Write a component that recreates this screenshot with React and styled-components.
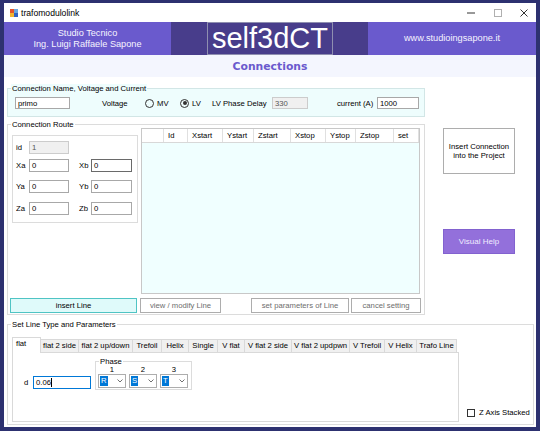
import React from "react";
import styled, { createGlobalStyle } from "styled-components";

const GlobalStyle = createGlobalStyle`
  html, body {
    margin: 0;
    padding: 0;
    background: #2d3170;
  }
  body {
    font-family: "Liberation Sans", Arial, sans-serif;
    font-size: 7.7px;
    color: #000;
  }
  * {
    box-sizing: border-box;
  }
`;

const Frame = styled.div`
  width: 540px;
  height: 431px;
  padding: 3px 4px 4px 4px;
  background: #2d3170;
`;

const Window = styled.div`
  width: 532px;
  height: 424px;
  background: #fff;
  display: flex;
  flex-direction: column;
  overflow: hidden;
`;

const TitleBar = styled.div`
  height: 19px;
  display: flex;
  align-items: center;
  padding-left: 6px;
  background: #fff;
`;

const TitleText = styled.span`
  margin-left: 3px;
  font-size: 8.6px;
`;

const Controls = styled.div`
  margin-left: auto;
  display: flex;
`;

const ControlButton = styled.div`
  width: ${({ $w }) => $w}px;
  height: 19px;
  display: flex;
  align-items: center;
  justify-content: center;
`;

const Header = styled.div`
  height: 33px;
  display: flex;
`;

const Segment = styled.div`
  width: ${({ $w }) => $w}px;
  background: ${({ $dark }) => ($dark ? "#483d8b" : "#6a5acd")};
  display: flex;
  flex-direction: column;
  align-items: center;
  justify-content: center;
  color: #f6f4ff;
  font-size: 9.2px;
  line-height: 11px;
`;

const Brand = styled.div`
  width: 126px;
  background: #483d8b;
  border: 1px solid #8f8fb0;
  color: #fff;
  font-size: 29px;
  line-height: 1;
  display: flex;
  align-items: center;
  justify-content: center;
`;

const Band = styled.div`
  height: 22px;
  background: #f4f6fe;
  display: flex;
  align-items: center;
  justify-content: center;
  font-family: "DejaVu Sans", Verdana, sans-serif;
  font-weight: bold;
  font-size: 10.8px;
  color: #6a5acd;
`;

const Content = styled.div`
  flex: 1;
  padding: 0 3px;
  display: flex;
  flex-direction: column;
`;

const TopArea = styled.div`
  display: flex;
  align-items: flex-start;
`;

const LeftCol = styled.div`
  width: 418px;
  display: flex;
  flex-direction: column;
`;

const RightCol = styled.div`
  display: flex;
  flex-direction: column;
  margin-left: 18px;
`;

const Group = styled.div`
  width: ${({ $w }) => $w}px;
  height: ${({ $h }) => $h}px;
  margin-top: ${({ $mt }) => $mt || 0}px;
  margin-left: ${({ $ml }) => $ml || 0}px;
  border: 1px solid ${({ $border }) => $border || "#dcdcdc"};
  background: ${({ $bg }) => $bg || "#fff"};
  display: flex;
  flex-direction: column;
  flex-shrink: 0;
`;

const Legend = styled.div`
  align-self: flex-start;
  height: 9px;
  line-height: 9px;
  margin: -5px 0 -4px 3px;
  padding: 0 1px;
  background: inherit;
  white-space: nowrap;
`;

const Row = styled.div`
  display: flex;
  align-items: center;
  margin-top: ${({ $mt }) => $mt || 0}px;
`;

const Label = styled.span`
  width: ${({ $w }) => ($w ? `${$w}px` : "auto")};
  margin-left: ${({ $ml }) => $ml || 0}px;
  white-space: nowrap;
  flex-shrink: 0;
`;

const TextBox = styled.div`
  width: ${({ $w }) => $w}px;
  height: ${({ $h }) => $h || 13}px;
  margin-left: ${({ $ml }) => $ml || 0}px;
  border: 1px solid
    ${({ $focus, $dark, $disabled }) =>
      $focus ? "#0078d7" : $dark ? "#6a6a6a" : $disabled ? "#cccccc" : "#a8a8a8"};
  background: ${({ $disabled }) => ($disabled ? "#f0f0f0" : "#fff")};
  color: ${({ $disabled }) => ($disabled ? "#555" : "#000")};
  padding-left: 2px;
  display: flex;
  align-items: center;
  white-space: nowrap;
  overflow: hidden;
  flex-shrink: 0;
`;

const Caret = styled.span`
  width: 1px;
  height: 9px;
  background: #000;
  margin-left: 0.5px;
`;

const Radio = styled.div`
  width: ${({ $w }) => $w}px;
  display: flex;
  align-items: center;
  flex-shrink: 0;
`;

const RadioDot = styled.span`
  width: 9px;
  height: 9px;
  border-radius: 50%;
  border: 1px solid #333;
  margin-right: 3px;
  display: flex;
  align-items: center;
  justify-content: center;

  &::after {
    content: "";
    width: 4px;
    height: 4px;
    border-radius: 50%;
    background: ${({ $checked }) => ($checked ? "#333" : "transparent")};
  }
`;

const RouteBody = styled.div`
  display: flex;
  align-items: flex-start;
`;

const CoordPanel = styled.div`
  width: 126px;
  height: 88px;
  margin: 10px 0 0 4px;
  border: 1px solid #dcdcdc;
  padding-left: 3px;
  display: flex;
  flex-direction: column;
`;

const DataGrid = styled.div`
  width: 279px;
  height: 166px;
  margin: 3px 0 0 3px;
  border: 1px solid #c8c8c8;
  background: #f0ffff;
`;

const GridHeader = styled.div`
  display: flex;
  height: 14px;
  background: #fff;
  border-bottom: 1px solid #d8d8d8;
`;

const HeaderCell = styled.div`
  width: ${({ $w }) => $w}px;
  border-right: 1px solid #e0e0e0;
  padding-left: 4px;
  line-height: 13px;
  white-space: nowrap;
`;

const ButtonRow = styled.div`
  display: flex;
  margin-top: 4px;
`;

const Button = styled.div`
  width: ${({ $w }) => $w}px;
  height: ${({ $h }) => $h || 15}px;
  margin-left: ${({ $ml }) => $ml || 0}px;
  margin-top: ${({ $mt }) => $mt || 0}px;
  border: 1px solid
    ${({ $tone }) =>
      $tone === "cyan" ? "#4fc4c4" : $tone === "purple" ? "#8262cf" : "#adadad"};
  background: ${({ $tone }) =>
    $tone === "cyan" ? "#dffafa" : $tone === "purple" ? "#9370db" : "#fff"};
  color: ${({ $tone, $muted }) =>
    $tone === "purple" ? "#f1ecff" : $muted ? "#6d6d6d" : "#000"};
  font-size: ${({ $fs }) => $fs || 7.7}px;
  line-height: 9px;
  display: flex;
  flex-direction: column;
  align-items: center;
  justify-content: center;
  text-align: center;
  white-space: nowrap;
  flex-shrink: 0;
`;

const LineBody = styled.div`
  display: flex;
  align-items: flex-end;
`;

const TabControl = styled.div`
  width: 447px;
  margin: 12px 0 0 4px;
  display: flex;
  flex-direction: column;
`;

const TabStrip = styled.div`
  height: 15px;
  display: flex;
  align-items: flex-end;
`;

const Tab = styled.div`
  width: ${({ $w }) => $w}px;
  height: ${({ $active }) => ($active ? 16 : 13)}px;
  margin-bottom: ${({ $active }) => ($active ? -1 : 0)}px;
  border: 1px solid #d9d9d9;
  border-bottom: none;
  border-left-width: ${({ $first }) => ($first ? 1 : 0)}px;
  background: ${({ $active }) => ($active ? "#fff" : "#f0f0f0")};
  position: relative;
  z-index: ${({ $active }) => ($active ? 1 : 0)};
  text-align: ${({ $active }) => ($active ? "left" : "center")};
  padding-left: ${({ $active }) => ($active ? 3 : 0)}px;
  line-height: ${({ $active }) => ($active ? 11 : 12)}px;
  white-space: nowrap;
  flex-shrink: 0;
`;

const TabPage = styled.div`
  height: 70px;
  border: 1px solid #d9d9d9;
  background: #fff;
  display: flex;
  align-items: flex-start;
  padding-left: 11px;
`;

const ComboRow = styled.div`
  display: flex;
  gap: 3px;
  padding-left: 2px;
`;

const ComboColumn = styled.div`
  width: 28px;
  display: flex;
  flex-direction: column;
`;

const PhaseNumber = styled.div`
  height: 9px;
  line-height: 9px;
  margin-top: 3px;
  text-align: center;
`;

const Combo = styled.div`
  height: 14px;
  border: 1px solid #adadad;
  background: #fff;
  display: flex;
  align-items: center;
  padding: 0 2px 0 1px;
`;

const Selection = styled.span`
  height: 10px;
  line-height: 10px;
  padding: 0 1px;
  background: #0078d7;
  color: #fff;
`;

const Chevron = styled.svg`
  margin-left: auto;
`;

const CheckRow = styled.div`
  display: flex;
  align-items: center;
  margin: 0 0 5px 8px;
`;

const CheckSquare = styled.span`
  width: 8px;
  height: 8px;
  border: 1px solid #333;
  background: #fff;
  margin-right: 4px;
`;

const AppIcon = () => (
  <svg width="8" height="8" viewBox="0 0 8 8">
    <rect x="0" y="0" width="4" height="4" fill="#e4532c" />
    <rect x="4" y="0" width="4" height="4" fill="#6aa6e0" />
    <rect x="0" y="4" width="4" height="4" fill="#f2b431" />
    <rect x="4" y="4" width="4" height="4" fill="#2f62c4" />
  </svg>
);

const ChevronDown = () => (
  <Chevron width="6" height="4" viewBox="0 0 6 4">
    <polyline points="0.5,0.5 3,3 5.5,0.5" fill="none" stroke="#606060" strokeWidth="0.9" />
  </Chevron>
);

const columns = [
  { label: "", w: 22 },
  { label: "Id", w: 24 },
  { label: "Xstart", w: 35 },
  { label: "Ystart", w: 31 },
  { label: "Zstart", w: 37 },
  { label: "Xstop", w: 35 },
  { label: "Ystop", w: 30 },
  { label: "Zstop", w: 38 },
  { label: "set", w: 25 },
];

const tabs = [
  { label: "flat", w: 29 },
  { label: "flat 2 side", w: 38 },
  { label: "flat 2 up/down", w: 54 },
  { label: "Trefoil", w: 29 },
  { label: "Helix", w: 27 },
  { label: "Single", w: 29 },
  { label: "V flat", w: 27 },
  { label: "V flat 2 side", w: 47 },
  { label: "V flat 2 updpwn", w: 58 },
  { label: "V Trefoil", w: 35 },
  { label: "V Helix", w: 32 },
  { label: "Trafo Line", w: 40 },
];

const phases = [
  { n: "1", v: "R" },
  { n: "2", v: "S" },
  { n: "3", v: "T" },
];

const App = () => {
  return (
    <Frame>
      <GlobalStyle />
      <Window>
        <TitleBar>
          <AppIcon />
          <TitleText>trafomodulolink</TitleText>
          <Controls>
            <ControlButton $w={27}>
              <svg width="8" height="2" viewBox="0 0 8 2">
                <line x1="0" y1="1" x2="8" y2="1" stroke="#333" strokeWidth="1" />
              </svg>
            </ControlButton>
            <ControlButton $w={27}>
              <svg width="8" height="8" viewBox="0 0 8 8">
                <rect x="0.5" y="0.5" width="7" height="7" fill="none" stroke="#b0b0b0" strokeWidth="1" />
              </svg>
            </ControlButton>
            <ControlButton $w={25}>
              <svg width="8" height="8" viewBox="0 0 8 8">
                <path d="M0.5 0.5 L7.5 7.5 M7.5 0.5 L0.5 7.5" stroke="#333" strokeWidth="1" />
              </svg>
            </ControlButton>
          </Controls>
        </TitleBar>

        <Header>
          <Segment $w={167}>
            <span>Studio Tecnico</span>
            <span>Ing. Luigi Raffaele Sapone</span>
          </Segment>
          <Segment $w={36} $dark />
          <Brand>self3dCT</Brand>
          <Segment $w={35} $dark />
          <Segment $w={168}>www.studioingsapone.it</Segment>
        </Header>

        <Band>Connections</Band>

        <Content>
          <TopArea>
            <LeftCol>
              <Group $w={418} $h={29} $mt={11} $bg="#eefdfd" $border="#d2e6e6">
                <Legend>Connection Name, Voltage and Current</Legend>
                <Row $mt={8}>
                  <TextBox $w={55} $h={12} $ml={7}>primo</TextBox>
                  <Label $ml={32} $w={43}>Voltage</Label>
                  <Radio $w={35}>
                    <RadioDot />
                    MV
                  </Radio>
                  <Radio $w={32}>
                    <RadioDot $checked />
                    LV
                  </Radio>
                  <Label $w={60}>LV Phase Delay</Label>
                  <TextBox $w={36} $h={12} $disabled>330</TextBox>
                  <Label $ml={29} $w={40}>current (A)</Label>
                  <TextBox $w={42} $h={12}>1000</TextBox>
                </Row>
              </Group>

              <Group $w={418} $h={191} $mt={7}>
                <Legend>Connection Route</Legend>
                <RouteBody>
                  <CoordPanel>
                    <Row $mt={5}>
                      <Label $w={13}>id</Label>
                      <TextBox $w={40} $disabled>1</TextBox>
                    </Row>
                    <Row $mt={5}>
                      <Label $w={13}>Xa</Label>
                      <TextBox $w={40}>0</TextBox>
                      <Label $ml={10} $w={12}>Xb</Label>
                      <TextBox $w={41} $dark>0</TextBox>
                    </Row>
                    <Row $mt={8}>
                      <Label $w={13}>Ya</Label>
                      <TextBox $w={40}>0</TextBox>
                      <Label $ml={10} $w={12}>Yb</Label>
                      <TextBox $w={41}>0</TextBox>
                    </Row>
                    <Row $mt={9}>
                      <Label $w={13}>Za</Label>
                      <TextBox $w={40}>0</TextBox>
                      <Label $ml={10} $w={12}>Zb</Label>
                      <TextBox $w={41}>0</TextBox>
                    </Row>
                  </CoordPanel>

                  <DataGrid>
                    <GridHeader>
                      {columns.map((c, i) => (
                        <HeaderCell key={i} $w={c.w}>
                          {c.label}
                        </HeaderCell>
                      ))}
                    </GridHeader>
                  </DataGrid>
                </RouteBody>

                <ButtonRow>
                  <Button $w={127} $ml={2} $tone="cyan">insert Line</Button>
                  <Button $w={81} $ml={3} $muted>view / modify Line</Button>
                  <Button $w={98} $ml={30} $muted>set parameters of Line</Button>
                  <Button $w={70} $ml={2} $muted>cancel setting</Button>
                </ButtonRow>
              </Group>
            </LeftCol>

            <RightCol>
              <Button $w={72} $h={46} $mt={51}>
                <span>Insert Connection</span>
                <span>into the Project</span>
              </Button>
              <Button $w={72} $h={25} $mt={55} $tone="purple" $fs={8}>
                Visual Help
              </Button>
            </RightCol>
          </TopArea>

          <Group $w={527} $h={101} $mt={9}>
            <Legend>Set Line Type and Parameters</Legend>
            <LineBody>
              <TabControl>
                <TabStrip>
                  {tabs.map((t, i) => (
                    <Tab key={t.label} $w={t.w} $active={i === 0} $first={i === 0}>
                      {t.label}
                    </Tab>
                  ))}
                </TabStrip>
                <TabPage>
                  <Row $mt={23}>
                    <Label $w={9}>d</Label>
                    <TextBox $w={58} $focus>
                      0.06
                      <Caret />
                    </TextBox>
                  </Row>
                  <Group $w={97} $h={29} $mt={8} $ml={4}>
                    <Legend>Phase</Legend>
                    <ComboRow>
                      {phases.map((p) => (
                        <ComboColumn key={p.n}>
                          <PhaseNumber>{p.n}</PhaseNumber>
                          <Combo>
                            <Selection>{p.v}</Selection>
                            <ChevronDown />
                          </Combo>
                        </ComboColumn>
                      ))}
                    </ComboRow>
                  </Group>
                </TabPage>
              </TabControl>
              <CheckRow>
                <CheckSquare />
                Z Axis Stacked
              </CheckRow>
            </LineBody>
          </Group>
        </Content>
      </Window>
    </Frame>
  );
};

export default App;
